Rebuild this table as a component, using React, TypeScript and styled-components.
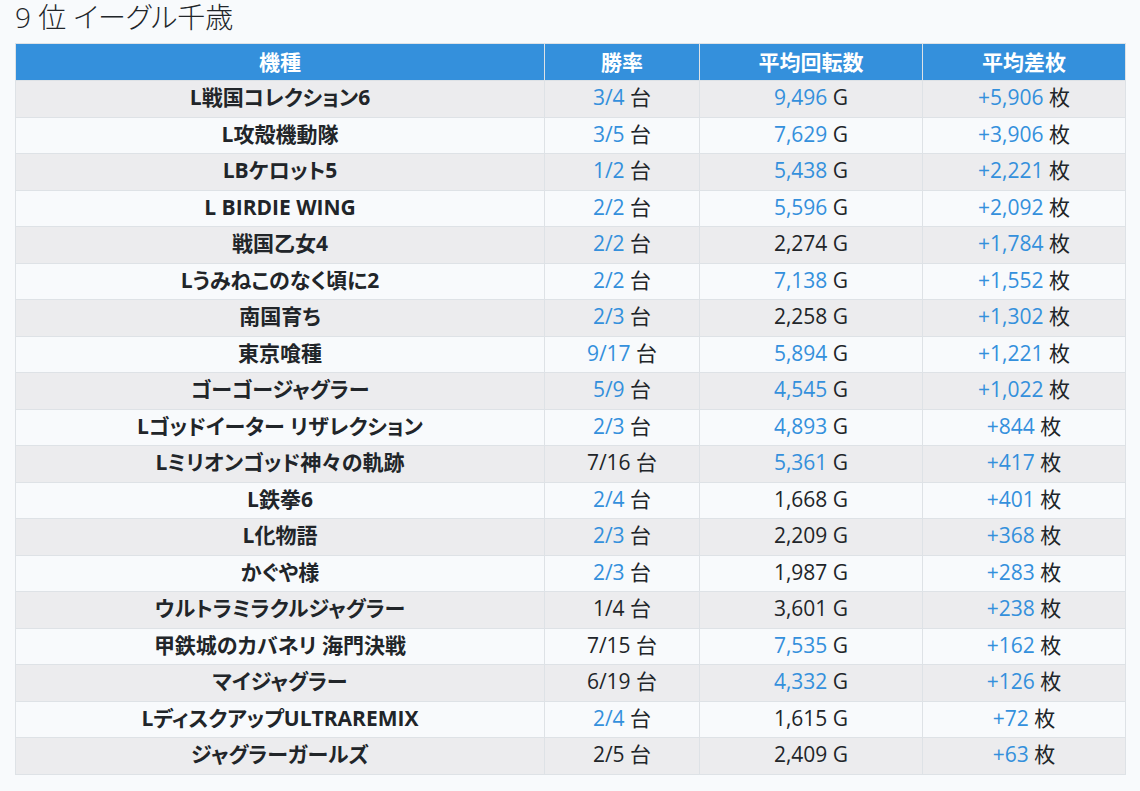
import React from 'react';
import styled, { createGlobalStyle } from 'styled-components';

const GlobalStyle = createGlobalStyle`
  body {
    margin: 0;
    background-color: #f8fafc;
    color: #212529;
    font-family: "Open Sans", "Noto Sans CJK JP", sans-serif;
    font-feature-settings: "palt";
  }
`;

const Page = styled.div`
  padding: 0 15px;
`;

const Title = styled.h3`
  margin: 0 0 9px;
  font-size: 28px;
  font-weight: 300;
  line-height: 34px;
`;

const Table = styled.table`
  width: 1110px;
  border-collapse: collapse;
  table-layout: fixed;
`;

const Col = styled.col<{ w: number }>`
  width: ${(p) => p.w}px;
`;

const HeadCell = styled.th`
  box-sizing: border-box;
  height: 37px;
  padding: 0 8px 3px;
  background-color: #3490dc;
  color: #fff;
  font-size: 21px;
  font-weight: 700;
  border: 1px solid #dee2e6;
  text-align: center;
`;

const Row = styled.tr<{ striped: boolean }>`
  background-color: ${(p) => (p.striped ? '#ececee' : 'transparent')};
`;

const Cell = styled.td<{ bold?: boolean }>`
  box-sizing: border-box;
  height: 36.5px;
  padding: 0 8px 3px;
  font-size: 21px;
  line-height: 26px;
  font-weight: ${(p) => (p.bold ? 700 : 400)};
  border: 1px solid #dee2e6;
  text-align: center;
  white-space: nowrap;
`;

const Num = styled.span<{ hot: boolean }>`
  color: ${(p) => (p.hot ? '#3490dc' : '#212529')};
`;

type Machine = [string, number, number, number, number];

const rows: Machine[] = [
  ['L戦国コレクション6', 3, 4, 9496, 5906],
  ['L攻殻機動隊', 3, 5, 7629, 3906],
  ['LBケロット5', 1, 2, 5438, 2221],
  ['L BIRDIE WING', 2, 2, 5596, 2092],
  ['戦国乙女4', 2, 2, 2274, 1784],
  ['Lうみねこのなく頃に2', 2, 2, 7138, 1552],
  ['南国育ち', 2, 3, 2258, 1302],
  ['東京喰種', 9, 17, 5894, 1221],
  ['ゴーゴージャグラー', 5, 9, 4545, 1022],
  ['Lゴッドイーター リザレクション', 2, 3, 4893, 844],
  ['Lミリオンゴッド神々の軌跡', 7, 16, 5361, 417],
  ['L鉄拳6', 2, 4, 1668, 401],
  ['L化物語', 2, 3, 2209, 368],
  ['かぐや様', 2, 3, 1987, 283],
  ['ウルトラミラクルジャグラー', 1, 4, 3601, 238],
  ['甲鉄城のカバネリ 海門決戦', 7, 15, 7535, 162],
  ['マイジャグラー', 6, 19, 4332, 126],
  ['LディスクアップULTRAREMIX', 2, 4, 1615, 72],
  ['ジャグラーガールズ', 2, 5, 2409, 63],
];

const fmt = (n: number) => n.toLocaleString('en-US');

const App = () => (
  <Page>
    <GlobalStyle />
    <Title>9 位 イーグル千歳</Title>
    <Table>
      <colgroup>
        <Col w={529} />
        <Col w={155} />
        <Col w={223} />
        <Col w={203} />
      </colgroup>
      <thead>
        <tr>
          <HeadCell>機種</HeadCell>
          <HeadCell>勝率</HeadCell>
          <HeadCell>平均回転数</HeadCell>
          <HeadCell>平均差枚</HeadCell>
        </tr>
      </thead>
      <tbody>
        {rows.map(([name, win, total, games, diff], i) => (
          <Row key={name} striped={i % 2 === 0}>
            <Cell bold>{name}</Cell>
            <Cell>
              <Num hot={win / total >= 0.5}>{win}/{total}</Num> 台
            </Cell>
            <Cell>
              <Num hot={games >= 4000}>{fmt(games)}</Num> G
            </Cell>
            <Cell>
              <Num hot={diff > 0}>+{fmt(diff)}</Num> 枚
            </Cell>
          </Row>
        ))}
      </tbody>
    </Table>
  </Page>
);

export default App;
